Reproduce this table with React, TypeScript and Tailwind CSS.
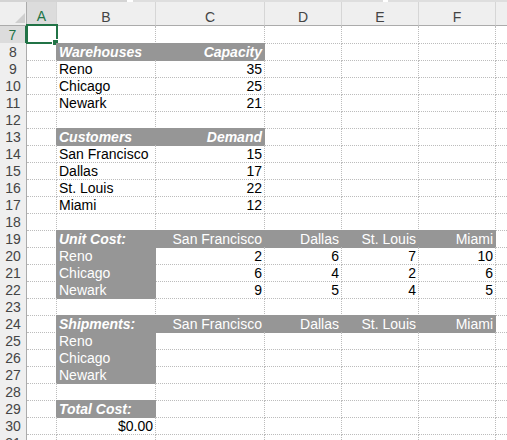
import clsx from "clsx";

type Cell = { t?: string; fill?: boolean; bi?: boolean; right?: boolean };

const COLS = ["A", "B", "C", "D", "E", "F", "G"];

const hdr = (t: string, right = false): Cell => ({ t, fill: true, bi: true, right });
const lab = (t: string): Cell => ({ t, fill: true });
const num = (t: string): Cell => ({ t, right: true });
const cust = (t: string): Cell => ({ t, fill: true, right: true });

const sheet: Record<number, Record<string, Cell>> = {
  8: { B: hdr("Warehouses"), C: hdr("Capacity", true) },
  9: { B: { t: "Reno" }, C: num("35") },
  10: { B: { t: "Chicago" }, C: num("25") },
  11: { B: { t: "Newark" }, C: num("21") },
  13: { B: hdr("Customers"), C: hdr("Demand", true) },
  14: { B: { t: "San Francisco" }, C: num("15") },
  15: { B: { t: "Dallas" }, C: num("17") },
  16: { B: { t: "St. Louis" }, C: num("22") },
  17: { B: { t: "Miami" }, C: num("12") },
  19: { B: hdr("Unit Cost:"), C: cust("San Francisco"), D: cust("Dallas"), E: cust("St. Louis"), F: cust("Miami") },
  20: { B: lab("Reno"), C: num("2"), D: num("6"), E: num("7"), F: num("10") },
  21: { B: lab("Chicago"), C: num("6"), D: num("4"), E: num("2"), F: num("6") },
  22: { B: lab("Newark"), C: num("9"), D: num("5"), E: num("4"), F: num("5") },
  24: { B: hdr("Shipments:"), C: cust("San Francisco"), D: cust("Dallas"), E: cust("St. Louis"), F: cust("Miami") },
  25: { B: lab("Reno") },
  26: { B: lab("Chicago") },
  27: { B: lab("Newark") },
  29: { B: hdr("Total Cost:") },
  30: { B: num("$0.00") },
};

const ROWS = Array.from({ length: 25 }, (_, i) => i + 7);

const isFill = (r: number, c: number) => !!sheet[r]?.[COLS[c]]?.fill;

// widths include the right gridline pixel; G runs off screen like the real sheet
const grid = "grid grid-cols-[27px_30px_99px_109px_77px_77px_77px_77px]";

export default function App() {
  return (
    <div className="w-[507px] h-[440px] overflow-hidden bg-white text-[14px] text-black [font-family:'Liberation_Sans',Arial,sans-serif]">
      {/* top strip (formula bar edge) */}
      <div className="flex h-[2px] w-[600px]">
        <div className="w-[127px] bg-[#d4d4d4]" />
        <div className="w-[6px] bg-white" />
        <div className="w-[250px] bg-[#dedede]" />
        <div className="w-[5px] bg-white" />
        <div className="flex-1 bg-[#dedede]" />
      </div>

      {/* column headers */}
      <div className={clsx(grid, "w-[583px] h-[24px] bg-[#efefef] text-[#444]")}>
        <div className="relative border-r border-b border-[#ababab]">
          <svg className="absolute right-[1px] bottom-[2px]" width="10" height="10" viewBox="0 0 10 10">
            <polygon points="10,0 10,10 0,10" fill="#cfcfcf" />
          </svg>
        </div>
        {COLS.map((c) => (
          <div
            key={c}
            className={clsx(
              "flex items-end justify-center leading-[16px] border-r border-r-[#d6d6d6]",
              c === "A" ? "bg-[#dcdcdc] text-[#217346] border-b-2 border-b-[#217346]" : "border-b border-b-[#ababab]"
            )}
          >
            {c}
          </div>
        ))}
      </div>

      {/* rows */}
      {ROWS.map((r) => (
        <div key={r} className={clsx(grid, "w-[583px] h-[17px]")}>
          <div
            className={clsx(
              "flex items-center justify-center leading-[16px] pt-px border-b border-b-[#d9d9d9]",
              r === 7
                ? "bg-[#dcdcdc] text-[#217346] border-r-2 border-r-[#217346]"
                : "bg-[#efefef] text-[#444] border-r border-r-[#ababab]"
            )}
          >
            {r}
          </div>
          {COLS.map((c, ci) => {
            const cell = sheet[r]?.[c] ?? {};
            const rightGray = isFill(r, ci) || isFill(r, ci + 1);
            const bottomGray = isFill(r, ci) || isFill(r + 1, ci);
            return (
              <div
                key={c}
                className={clsx(
                  "relative flex items-center whitespace-nowrap leading-[16px] pt-px px-[2px] border-r border-b border-dotted border-[#bcbcbc]",
                  cell.fill && "bg-[#969696] text-white",
                  cell.bi && "font-bold italic",
                  cell.right ? "justify-end" : "justify-start",
                  rightGray && "[border-right-style:solid] border-r-[#969696]",
                  bottomGray && "[border-bottom-style:solid] border-b-[#969696]"
                )}
              >
                {cell.t}
                {r === 7 && c === "A" && (
                  <>
                    <div className="absolute -left-[1px] -top-[2px] w-[32px] h-[20px] border-2 border-[#217346]" />
                    <div className="absolute left-[25px] top-[13px] w-[7px] h-[7px] bg-[#217346] border border-white" />
                  </>
                )}
              </div>
            );
          })}
        </div>
      ))}
    </div>
  );
}
